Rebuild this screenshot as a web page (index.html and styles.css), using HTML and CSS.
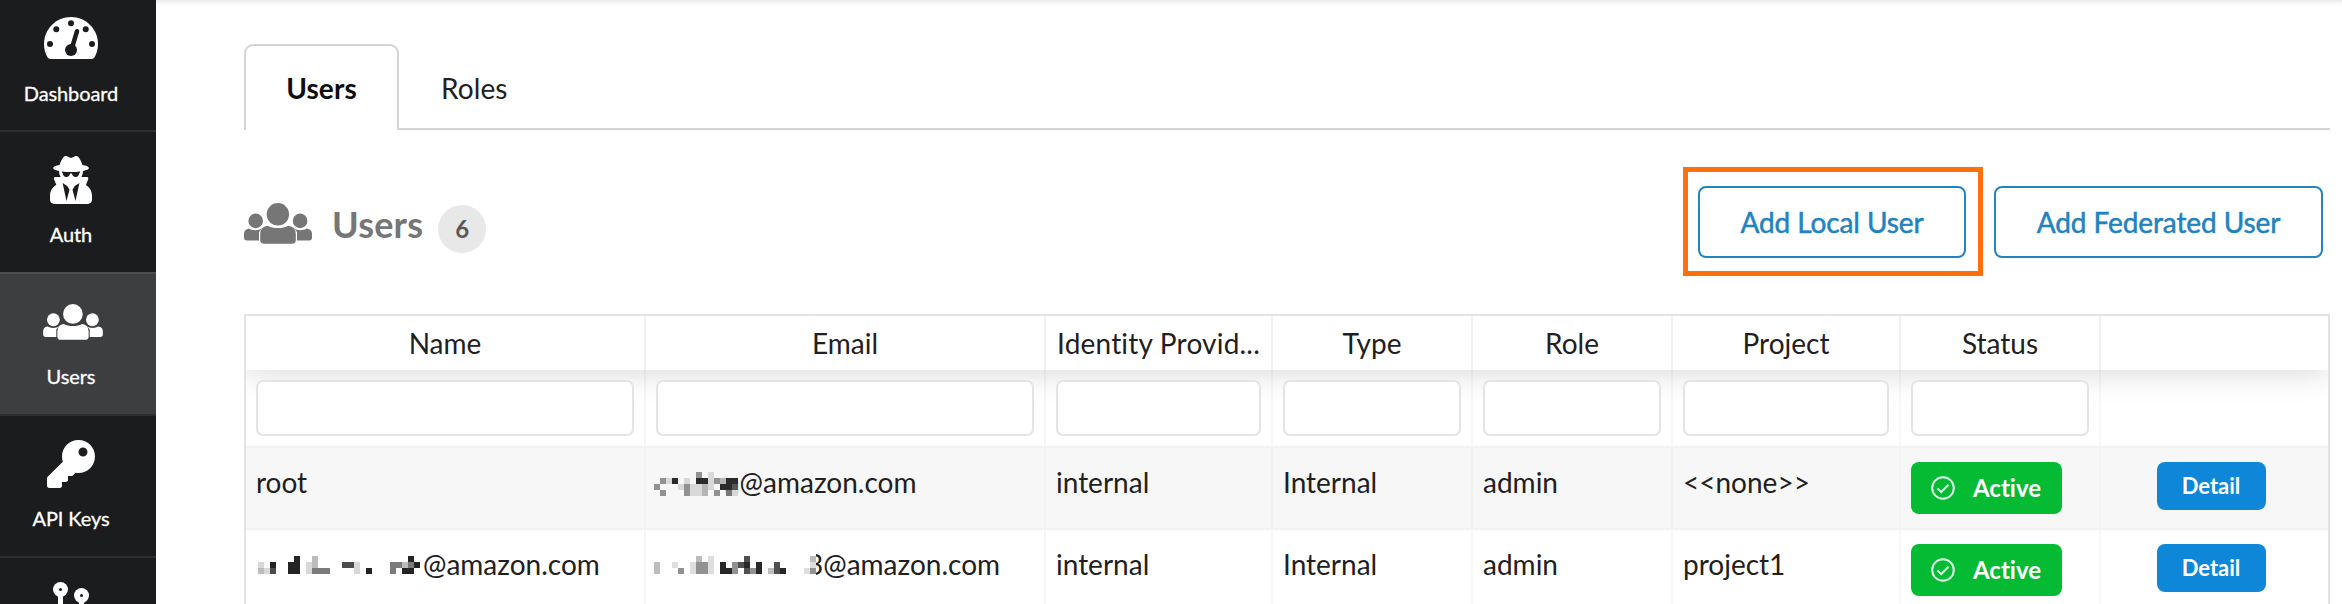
FILE: index.html
```html
<!DOCTYPE html>
<html lang="en">
<head>
<meta charset="utf-8">
<title>Users</title>
<link rel="stylesheet" href="styles.css">
</head>
<body>
<svg width="0" height="0" class="defs">
  <symbol id="group" viewBox="0 0 68 41">
    <circle cx="11.7" cy="17.9" r="7.3"/><circle cx="56.1" cy="17.9" r="7.3"/>
    <path d="M5 25.6C8.500 27.800 15 27.800 18 25.300L15 29V37.500H3Q0 37.500 0 34.500V31Q0 26.500 5 25.600Z"/>
    <path d="M62.800 25.600C59.300 27.800 52.800 27.800 50 25.300L53 29V37.500H65Q68 37.500 68 34.500V31Q68 26.500 62.800 25.600Z"/>
    <circle cx="33.9" cy="11.300" r="11.200"/>
    <path d="M23.500 22.700C29 25.800 38.800 25.800 44.300 22.700Q51.800 23.800 51.800 31V37Q51.800 40.800 48 40.800H20Q16.200 40.800 16.200 37V31Q16.200 23.800 23.500 22.700Z"/>
  </symbol>
</svg>
<div class="app">
  <nav class="sidebar">
    <a class="item first"><svg class="icon gauge" viewBox="0 32 576 448"><path fill-rule="evenodd" d="M288 32C129 32 0 161 0 320c0 53 14 102 39 145 6 9 16 15 28 15h442c12 0 22-6 28-15 25-43 39-92 39-145C576 161 447 32 288 32z"/><g class="cut"><circle cx="288" cy="98" r="32"/><circle cx="131" cy="162" r="32"/><circle cx="445" cy="162" r="32"/><circle cx="64" cy="320" r="32"/><circle cx="512" cy="320" r="32"/><circle cx="288" cy="384" r="64"/><path d="M352 184L298 365" stroke-width="48" stroke-linecap="round"/></g></svg><span>Dashboard</span></a>
    <a class="item"><svg class="icon spy" viewBox="0 0 448 512"><path d="M383.9 308.3l23.9-62.6c4-10.500-3.700-21.700-15-21.700h-58.500c11-18.900 17.800-40.600 17.800-64v-.3c39.200-7.800 64-19.100 64-31.700 0-13.300-27.300-25.100-70.100-33-9.200-32.800-27-65.800-40.600-82.800-9.500-11.900-25.900-15.600-39.500-8.800l-27.600 13.800c-9 4.500-19.600 4.500-28.600 0L182.100 3.400c-13.600-6.800-30-3.100-39.500 8.800-13.500 17-31.400 50-40.600 82.800-42.700 7.900-70 19.700-70 33 0 12.600 24.800 23.900 64 31.700v.3c0 23.400 6.800 45.100 17.800 64H56.300c-11.500 0-19.200 11.700-14.700 22.300l25.800 60.200C27.300 329.800 0 372.700 0 422.400v44.800C0 491.900 20.100 512 44.800 512h358.400c24.700 0 44.800-20.100 44.800-44.800v-44.800c0-48.400-25.800-90.400-64.100-114.100zM176 480l-41.600-192 49.600 32 24 40-32 120zm96 0l-32-120 24-40 49.600-32L272 480zm41.700-298.500c-3.900 11.900-7 24.600-16.500 33.400-10.100 9.300-48 22.400-64-25-2.800-8.400-15.400-8.400-18.300 0-17 50.200-56 32.400-64 25-9.500-8.800-12.700-21.500-16.500-33.400-.8-2.500-6.300-5.700-6.300-5.800v-10.800c28.300 3.600 61 5.800 96 5.800s67.700-2.100 96-5.800v10.800c-.1.1-5.600 3.200-6.400 5.800z"/></svg><span>Auth</span></a>
    <a class="item active"><svg class="icon people"><use href="#group"/></svg><span>Users</span></a>
    <a class="item"><svg class="icon key" viewBox="0 0 512 512"><path d="M512 176C512 273.200 433.200 352 336 352c-11.200 0-22.200-1.100-32.800-3.100l-24 27A24 24 0 0 1 261.200 384H224v40c0 13.300-10.700 24-24 24h-40v40c0 13.300-10.700 24-24 24H24c-13.300 0-24-10.700-24-24v-78.100c0-6.400 2.500-12.500 7-17l161.800-161.800C163.100 213.800 160 195.300 160 176 160 78.800 238.800 0 336 0c97.500 0 176 78.500 176 176zM336 128c0 26.500 21.500 48 48 48s48-21.500 48-48-21.500-48-48-48-48 21.500-48 48z"/></svg><span>API Keys</span></a>
    <a class="item"><svg class="icon branch" viewBox="0 0 36 48"><circle cx="7.500" cy="7.500" r="7.500"/><circle cx="28.500" cy="13.500" r="7.500"/><path d="M5 12H10V40H5ZM26 18H31V40H26Z"/><g class="cut"><circle cx="7.500" cy="7.500" r="1.500"/><circle cx="28.500" cy="13.500" r="1.500"/></g></svg></a>
  </nav>
  <main class="main">
    <div class="tabs"><a class="tab current">Users</a><a class="tab">Roles</a></div>
    <header class="head">
      <svg class="head-icon"><use href="#group"/></svg>
      <h1>Users</h1><span class="count">6</span>
      <div class="actions"><div class="highlight"><button class="btn">Add Local User</button></div><button class="btn wide">Add Federated User</button></div>
    </header>
    <section class="table">
      <div class="row header"><div>Name</div><div>Email</div><div class="spaced">Identity Provid...</div><div>Type</div><div>Role</div><div>Project</div><div>Status</div><div></div></div>
      <div class="row filters"><div><input></div><div><input></div><div><input></div><div><input></div><div><input></div><div><input></div><div><input></div><div></div></div>
      <div class="row data odd"><div>root</div><div class="masked"><svg class="mosaic m-root" viewBox="0 0 14 4" shape-rendering="crispEdges"><path fill="#929292" d="M1 1h1v1H1zM0 2h1v1H0zM1 3h1v1H1zM7 0h1v1H7zM10 1h1v1h-1zM5 2h1v2H5zM10 3h1v1h-1z"/><path fill="#2b2b2b" d="M3 1h1v1H3zM7 1h2v1H7zM12 1h2v1h-2zM11 2h2v1h-2z"/><path fill="#d8d8d8" d="M2 1h1v1H2zM4 2h1v1H4zM5 1h1v1H5zM9 0h1v3H9zM6 2h2v1H6zM6 3h2v1H6zM13 3h1v1h-1z"/><path fill="#b5b5b5" d="M8 2h1v2H8zM11 1h1v1h-1z"/><path fill="#555" d="M13 2h1v1h-1z"/><path fill="#777" d="M12 3h1v1h-1z"/></svg><span class="after-root">n@amazon.com</span></div><div>internal</div><div>Internal</div><div>admin</div><div>&lt;&lt;none&gt;&gt;</div><div><span class="label"><svg viewBox="0 0 24 24"><circle cx="12" cy="12" r="10.800"/><path d="M6.500 12.500l3.700 3.700 7.300-7.500"/></svg>Active</span></div><div class="center"><button class="detail">Detail</button></div></div>
      <div class="row data"><div class="masked"><svg class="mosaic m-name" viewBox="0 0 27 3" shape-rendering="crispEdges"><path fill="#242424" d="M2 1h1v1H2zM6 0h1v3H6zM5 1h1v2H5zM18 2h1v1h-1zM25 0h1v1h-1zM24 2h2v1h-2zM26 1h1v1h-1z"/><path fill="#4c4c4c" d="M2 2h1v1H2zM11 1h1v1h-1zM14 1h2v1h-2z"/><path fill="#d8d8d8" d="M0 1h1v1H0zM1 2h1v1H1zM8 1h1v2H8zM16 1h1v2h-1z"/><path fill="#bcbcbc" d="M0 2h1v1H0zM9 0h1v2H9zM24 1h1v1h-1z"/><path fill="#7b7b7b" d="M9 2h3v1H9zM22 1h2v1h-2zM22 2h1v1h-1zM25 1h1v1h-1z"/><path fill="#fff" d="M11 1h1v1h-1z"/></svg>@amazon.com</div><div class="masked"><svg class="mosaic m-mail" viewBox="0 0 28 3" shape-rendering="crispEdges"><path fill="#fff" d="M24-.5h3v4h-3z"/><path fill="#bcbcbc" d="M0 1h1v1H0zM0 2h1v1H0zM7 0h1v1H7zM26 0h1v1h-1zM19 2h1v1h-1z"/><path fill="#dedede" d="M3 1h1v1H3zM6 1h1v2H6zM9 0h1v3H9zM20 1h1v1h-1zM25 2h1v1h-1zM26 1h1v1h-1z"/><path fill="#929292" d="M4 2h1v1H4zM7 1h2v2H7zM13 1h1v2h-1zM26 2h1v1h-1zM16 2h1v1h-1z"/><path fill="#272727" d="M11 1h1v2h-1zM12 2h1v1h-1zM17 1h1v2h-1zM15 1h1v1h-1zM21 2h1v1h-1z"/><path fill="#505050" d="M14 1h1v1h-1zM15 0h1v1h-1zM15 2h1v1h-1zM20 1h1v2h-1z"/></svg><span class="after-mail">3@amazon.com</span></div><div>internal</div><div>Internal</div><div>admin</div><div>project1</div><div><span class="label"><svg viewBox="0 0 24 24"><circle cx="12" cy="12" r="10.800"/><path d="M6.500 12.500l3.700 3.700 7.300-7.500"/></svg>Active</span></div><div class="center"><button class="detail">Detail</button></div></div>
    </section>
  </main>
</div>
</body>
</html>
```
FILE: styles.css
```css
* { box-sizing: border-box; }
body { margin: 0; font: 28px/40px Lato, sans-serif; font-variant-ligatures: none; color: #1f2021; background: #fff; overflow: hidden; }
.defs { position: absolute; }
.app { display: flex; height: 604px; overflow: hidden; }

.sidebar { width: 156px; flex: none; background: #1b1c1d; color: #fff; overflow: hidden; }
.item { display: flex; flex-direction: column; align-items: center; height: 142px; border-top: 2px solid #2d2e2f; padding: 24px 14px 0 0; font-size: 20px; line-height: 28px; letter-spacing: -.1px; -webkit-text-stroke: .3px #fff; }
.item.first { height: 130px; border: 0; padding-top: 17px; }
.item.active { background: #3d3e3f; border-color: #4d4e4f; padding-top: 30px; }
.icon { fill: #fff; display: block; flex: none; }
.cut { fill: #1b1c1d; stroke: #1b1c1d; stroke-width: 0; }
.gauge { width: 54px; height: 42px; margin-bottom: 20px; }
.spy { width: 42px; height: 48px; margin-bottom: 16px; }
.people { width: 60px; height: 36px; margin: 0 0 22px 4px; }
.key { width: 48px; height: 48px; margin-bottom: 16px; }
.branch { width: 36px; height: 48px; }

.main { flex: 1; padding: 44px 12px 0 88px; box-shadow: inset 0 6px 6px -5px rgba(0,0,0,.13); min-width: 0; }
.tabs { display: flex; height: 86px; box-shadow: inset 0 -2px #d4d4d5; }
.tab { padding: 24px 42px 0; letter-spacing: .1px; }
.tab.current { width: 155px; padding: 22px 0 0; text-align: center; font-weight: 700; color: #0e0e0f; background: #fff; border: 2px solid #d4d4d5; border-bottom: 0; border-radius: 9px 9px 0 0; }

.head { display: flex; height: 184px; padding-top: 37px; }
.head-icon { width: 68px; height: 41px; margin-top: 36px; fill: #767676; }
h1 { margin: 33px 0 0 20px; font-size: 36px; line-height: 48px; color: #767676; font-weight: 700; letter-spacing: .2px; }
.count { width: 48px; height: 48px; margin: 38px 0 0 15px; border-radius: 50%; background: #e8e8e8; color: #595959; font-size: 24px; line-height: 48px; text-align: center; font-weight: 700; }
.actions { display: flex; margin: 0 7px 0 auto; }
.highlight { width: 300px; height: 109px; border: 5px solid #ff6f0a; padding: 14px 0 0 10px; margin-right: 11px; }
.btn { display: block; width: 268px; height: 72px; padding: 0; border: 2px solid #2185c0; border-radius: 8px; background: #fff; color: #1f83c0; font: 28px/40px Lato, sans-serif; letter-spacing: -.1px; -webkit-text-stroke: .5px #1f83c0; }
.btn.wide { width: 329px; margin-top: 19px; }

.table { border: 2px solid #e3e3e3; height: 400px; overflow: hidden; }
.row { display: grid; grid-template-columns: 400px 400px 227px 200px 200px 228px 200px 1fr; }
.row > div { padding: 0 10px; border-right: 2px solid #f7f7f7; white-space: nowrap; }
.row > div:last-child { border-right: 0; }
.header { height: 54px; box-shadow: 0 4px 30px rgba(0,0,0,.15); }
.header > div { padding: 7px 10px; text-align: center; border-color: #f0f0f0; }
.header > .spaced { letter-spacing: .2px; }
.filters { height: 78px; border-bottom: 2px solid #f2f2f2; }
.filters > div { padding-top: 10px; border-color: rgba(0,0,0,.03); }
input { display: block; width: 100%; height: 56px; border: 2px solid #e4e4e4; border-radius: 7px; background: #fff; }
.data { height: 82px; border-bottom: 2px solid #f2f2f2; }
.data > div { padding-top: 14px; }
.odd { background: #f7f7f7; }
.odd > div { border-color: #f2f2f2; }
.masked { display: flex; }
.mosaic { flex: none; display: block; position: relative; z-index: 1; overflow: visible; }
.m-root { width: 84px; height: 24px; margin: 10px 0 0 -2px; }
.m-name { width: 162px; height: 18px; margin: 12px 3px 0 2px; }
.m-mail { width: 168px; height: 18px; margin: 12px 0 0 -2px; }
.after-root { margin-left: -14px; }
.after-mail { margin-left: -15px; }
.label { display: flex; align-items: center; width: 151px; height: 52px; padding-left: 20px; border-radius: 8px; background: #05bb33; color: #fff; font-size: 24px; font-weight: 700; }
.label svg { width: 24px; height: 24px; margin-right: 18px; fill: none; stroke: #e0ffe8; stroke-width: 2; }
.center { display: flex; justify-content: center; }
.row > .center { padding-right: 17px; }
.detail { width: 109px; height: 48px; padding: 0; border: 0; border-radius: 8px; background: #0e87d8; color: #fff; font: 700 22px/40px Lato, sans-serif; }
```
